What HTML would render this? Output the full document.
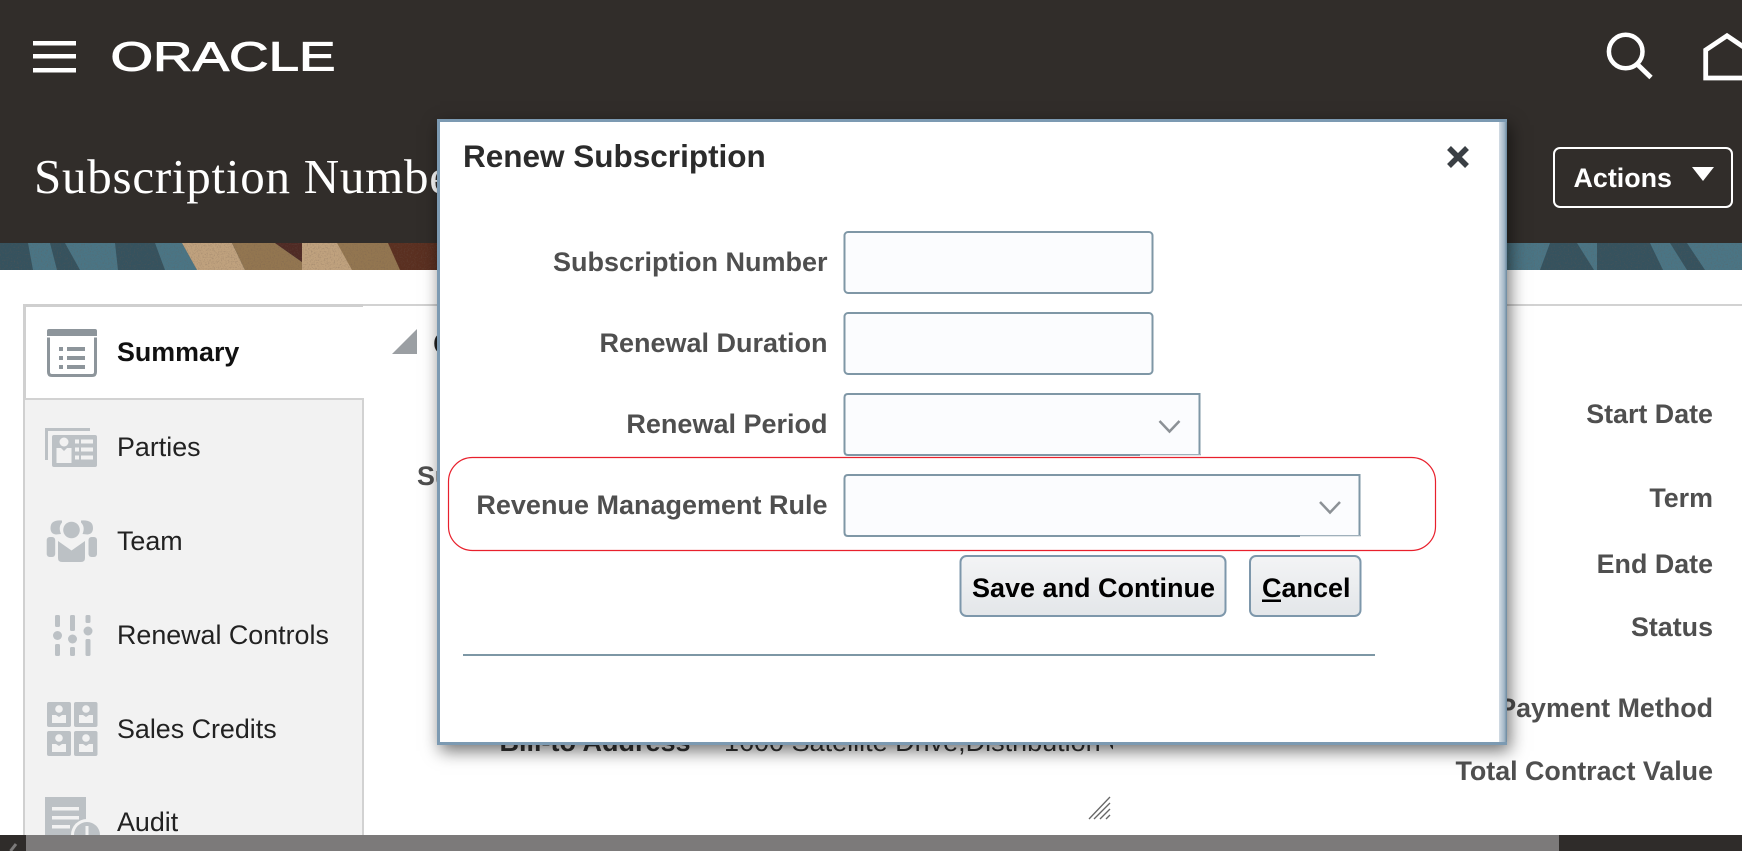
<!DOCTYPE html>
<html>
<head>
<meta charset="utf-8">
<style>
html,body{margin:0;padding:0;width:1742px;height:851px;overflow:hidden;background:#fff}
body{position:relative;font-family:"Liberation Sans",sans-serif}
svg.l{position:absolute;left:0;top:0}
.dlg{position:absolute;left:437px;top:119px;width:1070px;height:626px;background:#7c9ab2;box-shadow:3px 6px 16px rgba(0,0,0,.55)}
.strip{position:absolute;right:0;top:3px;bottom:3px;width:8px;background:linear-gradient(90deg,#d3dce4,#a3b7c7 65%,#6a889f)}
.in{position:absolute;left:3px;top:3px;width:1059px;height:620px;background:#fff}
text{font-family:"Liberation Sans",sans-serif;font-size:26.85px}
.b{font-weight:700}
.lb{font-weight:700;fill:#4f4f4f;text-anchor:end}
.dl{font-size:27px}
.mi{fill:#222}
</style>
</head>
<body>
<svg class="l" width="1742" height="851" viewBox="0 0 1742 851">
<defs>
<filter id="sp" x="0" y="0" width="100%" height="100%"><feTurbulence type="fractalNoise" baseFrequency="0.7" numOctaves="2" seed="4"/><feColorMatrix values="0 0 0 0 0.15  0 0 0 0 0.1  0 0 0 0 0.08  1.6 0 0 0 -0.75"/></filter>
</defs>
<rect width="1742" height="243" fill="#312d2a"/>
<!-- banner -->
<rect y="243" width="1742" height="27" fill="#35525e"/>
<g fill="#4a7585">
<polygon points="28,243 50,243 57,270 33,270"/>
<polygon points="65,243 115,243 118,270 80,270"/>
<polygon points="155,243 182,243 197,270 165,270"/>
<polygon points="1507,243 1550,243 1540,270 1507,270"/>
<polygon points="1577,243 1597,243 1597,270 1594,270"/>
<polygon points="1650,243 1670,243 1687,270 1663,270"/>
<polygon points="1687,243 1742,243 1742,270 1705,270"/>
</g>
<polygon points="182,243 232,243 245,270 197,270" fill="#c0a27e"/>
<polygon points="232,243 275,243 302,262 302,243 337,243 388,243 440,243 440,270 245,270" fill="#937650"/>
<polygon points="275,243 302,243 302,262" fill="#4f2a24"/>
<polygon points="302,243 337,243 352,270 302,270" fill="#c0a27e"/>
<polygon points="388,243 440,243 440,270 400,270" fill="#5a2f20"/>
<rect y="243" width="1742" height="27" filter="url(#sp)" opacity=".5"/>
<!-- hamburger -->
<g fill="#fff"><rect x="33" y="41" width="43" height="4.5"/><rect x="33" y="54" width="43" height="4.5"/><rect x="33" y="68" width="43" height="4.5"/></g>
<!-- logo -->
<text x="110.500" y="70.500" fill="#fff" stroke="#fff" stroke-width="1" textLength="225" lengthAdjust="spacingAndGlyphs" style="font-size:41px">ORACLE</text>
<!-- title -->
<text x="34" y="193" fill="#fff" style="font-family:'Liberation Serif',serif;font-size:49px;letter-spacing:.75px">Subscription Number</text>
<!-- search -->
<circle cx="1625.700" cy="51.500" r="16.800" fill="none" stroke="#fff" stroke-width="4.500"/>
<line x1="1637" y1="64" x2="1651" y2="77.500" stroke="#fff" stroke-width="4.800"/>
<!-- home -->
<path d="M1705.700 78V50L1727 35.800L1748 50V78Z" fill="none" stroke="#fff" stroke-width="4.800"/>
<!-- actions -->
<rect x="1554" y="148" width="178" height="59" rx="6" fill="none" stroke="#fff" stroke-width="2"/>
<text x="1573.500" y="187" class="b" fill="#fff">Actions</text>
<polygon points="1692,167 1714,167 1703,181" fill="#fff"/>
<!-- content -->
<rect y="304" x="363" width="1379" height="2" fill="#d2d2d2"/>
<rect x="23" y="304" width="340" height="3" fill="#cfcfcf"/>
<rect x="23" y="304" width="3" height="531" fill="#d0d0d0"/>
<rect x="25" y="398" width="339" height="437" fill="#f2f2f2"/>
<rect x="25" y="398" width="339" height="2" fill="#d2d2d2"/>
<rect x="362" y="398" width="2" height="437" fill="#d2d2d2"/>
<text x="117" y="361" class="b" fill="#111">Summary</text>
<text x="117" y="456" class="mi">Parties</text>
<text x="117" y="550" class="mi">Team</text>
<text x="117" y="644" class="mi">Renewal Controls</text>
<text x="117" y="738" class="mi">Sales Credits</text>
<text x="117" y="831" class="mi">Audit</text>
<!-- summary icon -->
<path d="M47 336V331Q47 329 49 329H95Q97 329 97 331V336Z" fill="#8d959b"/>
<path d="M48.500 337.500V372Q48.500 375.500 52 375.500H92Q95.500 375.500 95.500 372V337.500" fill="#fff" stroke="#8d959b" stroke-width="3"/>
<g fill="#8d959b"><rect x="59" y="347" width="4" height="4"/><rect x="59" y="356" width="4" height="4"/><rect x="59" y="365" width="4" height="4"/><rect x="67" y="347" width="18" height="4"/><rect x="67" y="356" width="18" height="4"/><rect x="67" y="365" width="18" height="4"/></g>
<!-- parties icon -->
<g fill="#bcc1c5">
<path d="M45 428H90V431H48V460H45Z"/>
<rect x="52" y="435" width="45" height="32" rx="2"/>
</g>
<g fill="#f2f2f2">
<circle cx="64" cy="442" r="4.500"/><path d="M56.500 448H61L64 451L67 448H71.500V463H56.500Z"/>
<rect x="75" y="439.500" width="4" height="4"/><rect x="75" y="447.500" width="4" height="4"/><rect x="75" y="455.500" width="4" height="4"/>
<rect x="81" y="439.500" width="12" height="4"/><rect x="81" y="447.500" width="12" height="4"/><rect x="81" y="455.500" width="12" height="4"/>
</g>
<!-- team icon -->
<g fill="#bcc1c5">
<path d="M62 520.500Q50.500 519.500 50.500 528Q50.500 534 56 534.500L61 534Q58 527 62 522.500Z"/>
<path d="M81 520.500Q93 519.500 93 528Q93 534 87.500 534.500L82.500 534Q85.500 527 81 522.500Z"/>
<circle cx="71.500" cy="530" r="8.300"/>
<rect x="46.700" y="537" width="8.500" height="20" rx="3"/>
<rect x="88.500" y="537" width="8.500" height="20" rx="3"/>
<path d="M58 541L71.500 550.500L85 541V558Q85 562 81 562H62Q58 562 58 558Z"/>
</g>
<!-- controls icon -->
<g fill="#bcc1c5">
<rect x="55" y="615" width="5" height="12" rx="1.500"/><rect x="55" y="644" width="5" height="12" rx="1.500"/><circle cx="57.500" cy="635.500" r="4.500"/>
<rect x="70" y="615" width="5" height="16" rx="1.500"/><rect x="70" y="647" width="5" height="9" rx="1.500"/><circle cx="72.500" cy="639" r="4.500"/>
<rect x="85.500" y="615" width="5" height="8" rx="1.500"/><rect x="85.500" y="639" width="5" height="17" rx="1.500"/><circle cx="88" cy="631" r="4.500"/>
</g>
<!-- sales credits icon -->
<g fill="#bcc1c5"><rect x="47" y="702" width="24" height="25" rx="2"/><rect x="74" y="702" width="23.500" height="25" rx="2"/><rect x="47" y="731" width="24" height="25" rx="2"/><rect x="74" y="731" width="23.500" height="25" rx="2"/></g>
<g fill="#f2f2f2">
<circle cx="59" cy="709" r="3.800"/><path d="M52 715H56L59 717L62 715H66V723H52Z"/>
<circle cx="86" cy="709" r="3.800"/><path d="M79 715H83L86 717L89 715H93V723H79Z"/>
<circle cx="59" cy="738" r="3.800"/><path d="M52 744H56L59 746L62 744H66V752H52Z"/>
<circle cx="86" cy="738" r="3.800"/><path d="M79 744H83L86 746L89 744H93V752H79Z"/>
</g>
<!-- audit icon -->
<rect x="45" y="797" width="41" height="38" fill="#bcc1c5"/>
<g fill="#f2f2f2"><rect x="52" y="807" width="27" height="3.500"/><rect x="52" y="816" width="27" height="3.500"/><rect x="52" y="825" width="18" height="3.500"/></g>
<circle cx="87" cy="835" r="16" fill="#f2f2f2"/><circle cx="87" cy="835" r="13" fill="#bcc1c5"/><rect x="85.500" y="826" width="3" height="9" fill="#f2f2f2"/>
<!-- behind-dialog main content -->
<polygon points="392,354 417,329 417,354" fill="#9b9fa3"/>
<text x="433" y="354" class="b" fill="#222" style="font-size:31px">Contract</text>
<text x="417" y="485" class="lb" style="text-anchor:start">Subscription</text>
<text x="499.500" y="751" class="b" fill="#333" style="font-size:27px">Bill-to Address</text>
<svg x="720" y="720" width="393" height="50"><text x="4" y="31" fill="#333" style="font-size:27px">1600 Satellite Drive,Distribution Center</text></svg>
<g stroke="#666" stroke-width="1.300"><line x1="1089" y1="819" x2="1110" y2="797"/><line x1="1094" y1="819" x2="1110" y2="803"/><line x1="1100" y1="819" x2="1110" y2="809"/><line x1="1106" y1="819" x2="1110" y2="815"/></g>
<text x="1713" y="423" class="lb">Start Date</text>
<text x="1713" y="507" class="lb">Term</text>
<text x="1713" y="573" class="lb">End Date</text>
<text x="1713" y="636" class="lb">Status</text>
<text x="1713" y="717" class="lb">Payment Method</text>
<text x="1713" y="780" class="lb">Total Contract Value</text>
<!-- bottom scrollbar -->
<rect y="835" width="1742" height="16" fill="#7c7a7a"/>
<rect y="835" width="26" height="16" fill="#2f2c2a"/>
<rect x="1559" y="835" width="183" height="16" fill="#2f2c2a"/>
<path d="M16 844L10.500 851" fill="none" stroke="#7c7a7a" stroke-width="3"/>
</svg>

<div class="dlg"><div class="strip"></div><div class="in"></div></div>

<svg class="l" width="1742" height="851" viewBox="0 0 1742 851">
<text x="463" y="167" class="b" fill="#2b2b2b" style="font-size:31.5px">Renew Subscription</text>
<path d="M1449 148L1467 166M1467 148L1449 166" stroke="#3a3f44" stroke-width="5.500" fill="none"/>
<text x="827.500" y="271" class="lb dl">Subscription Number</text>
<text x="827.500" y="352" class="lb dl">Renewal Duration</text>
<text x="827.500" y="433" class="lb dl">Renewal Period</text>
<text x="827.500" y="514" class="lb dl">Revenue Management Rule</text>
<g fill="#fbfcfe" stroke="#7f97a6" stroke-width="2">
<rect x="844.500" y="232" width="308" height="61" rx="3.500"/>
<rect x="844.500" y="313" width="308" height="61" rx="3.500"/>
<path d="M848 394H1199.500V455H848Q844.500 455 844.500 451.500V397.500Q844.500 394 848 394Z"/>
<path d="M848 475H1359.500V536H848Q844.500 536 844.500 532.500V478.500Q844.500 475 848 475Z"/>
</g>
<rect x="1140" y="454" width="61.500" height="2.500" fill="#fff"/>
<rect x="1140" y="454" width="61" height="1.300" fill="#9fb0bb"/>
<rect x="1300" y="535" width="61.500" height="2.500" fill="#fff"/>
<rect x="1300" y="535" width="61" height="1.300" fill="#9fb0bb"/>
<path d="M1159.500 421L1169.500 431.500L1179.500 421" fill="none" stroke="#8c9196" stroke-width="2.500"/>
<path d="M1320 502L1330 512.500L1340 502" fill="none" stroke="#8c9196" stroke-width="2.500"/>
<rect x="448.500" y="457.500" width="987" height="93" rx="24" fill="none" stroke="#e8202c" stroke-width="1.200"/>
<defs><linearGradient id="bg" x1="0" y1="0" x2="0" y2="1"><stop offset="0" stop-color="#f3f4f5"/><stop offset="1" stop-color="#e3e6e9"/></linearGradient></defs>
<rect x="960.500" y="556" width="265" height="60" rx="6" fill="url(#bg)" stroke="#7d97ab" stroke-width="2"/>
<rect x="1250" y="556" width="110.500" height="60" rx="6" fill="url(#bg)" stroke="#7d97ab" stroke-width="2"/>
<text x="972" y="597" class="b" fill="#000" textLength="243" style="font-size:27px">Save and Continue</text>
<text x="1262" y="597" class="b" fill="#000" style="font-size:27px">Cancel</text>
<rect x="1262" y="599.500" width="19" height="2.500" fill="#000"/>
<rect x="463" y="654" width="912" height="2" fill="#7d97a5"/>
</svg>
</body>
</html>
